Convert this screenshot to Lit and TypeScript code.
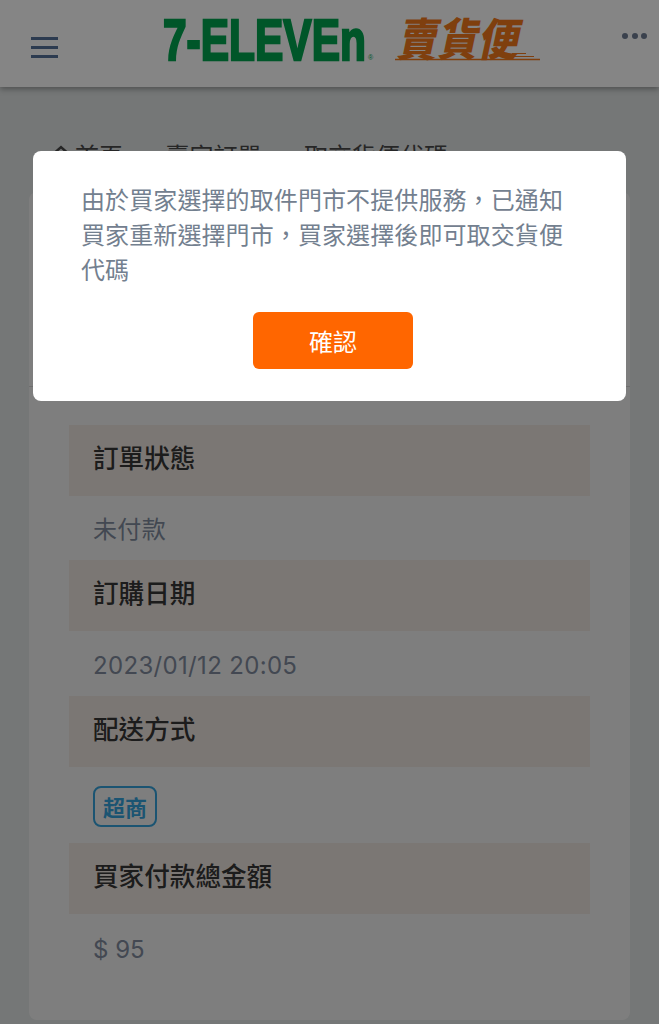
import { LitElement, html, css } from "lit";
import { customElement } from "lit/decorators.js";

const ROWS: [string, unknown, string][] = [
  ["訂單狀態", "未付款", "v1"],
  ["訂購日期", "2023/01/12 20:05", "v2"],
  ["配送方式", html`<span class="badge">超商</span>`, "v3"],
  ["買家付款總金額", "$ 95", "v4"],
];

@customElement("app-root")
export class AppRoot extends LitElement {
  static styles = css`
    :host {
      display: block;
      position: relative;
      height: 1024px;
      overflow: hidden;
      background: #e0e4e4;
      font-family: Inter, "Noto Sans CJK TC", sans-serif;
      font-size: 24px;
    }
    header {
      height: 87px;
      background: #fff;
      box-shadow: 0 2px 6px rgba(0, 0, 0, 0.35);
      display: flex;
      position: relative;
      box-sizing: border-box;
    }
    .burger {
      margin: 37px 0 0 31px;
      width: 27px;
      height: 21px;
      display: flex;
      flex-direction: column;
      justify-content: space-between;
    }
    .burger i { display: block; height: 3px; background: #55719a; }
    .logo { position: absolute; left: 160px; top: 0; }
    .dots { position: absolute; left: 622px; top: 33px; display: flex; gap: 3.5px; }
    .dots i { width: 6px; height: 6px; border-radius: 50%; background: #6f7d95; }
    main { padding: 0 29px; }
    .crumb {
      margin: 57px 0 0 0;
      height: 48px;
      padding-left: 20px;
      display: flex;
      align-items: flex-start;
      color: #4a4a4a;
      line-height: 26px;
    }
    .crumb .sep { width: 44px; height: 24px; display: flex; justify-content: center; margin: 2px -0.75px 0; }
    .crumb span.home { margin-left: 2px; }
    .card {
      height: 828px;
      box-sizing: border-box;
      background: #f2f2f2;
      border-radius: 8px;
      padding: 0 40px;
    }
    .title { height: 194px; border-bottom: 1px solid #d4d4d4; margin: 0 -40px; }
    .rows { padding-top: 38px; }
    .head {
      background: #ece4de;
      height: 71px;
      padding-left: 24px;
      padding-bottom: 9px;
      display: flex;
      align-items: center;
      box-sizing: border-box;
      font-size: 25.6px;
      font-weight: 500;
      color: #363636;
    }
    .val {
      padding-left: 24px;
      display: flex;
      align-items: center;
      color: #808b9d;
      letter-spacing: 0.33px;
      box-sizing: border-box;
    }
    .v1 { height: 64px; padding-bottom: 1px; }
    .v2 { height: 65px; padding-top: 3px; }
    .v3 { height: 76px; padding-top: 2px; }
    .v4 { height: 68px; padding-top: 2px; letter-spacing: 0; }
    .badge {
      display: inline-flex;
      align-items: center;
      justify-content: center;
      width: 64px;
      height: 41px;
      box-sizing: border-box;
      border: 2px solid #35a2da;
      border-radius: 8px;
      color: #35a2da;
      font-size: 22px;
      font-weight: 700;
      letter-spacing: 0;
    }
    .overlay { position: absolute; inset: 0; background: rgba(0, 0, 0, 0.48); }
    .modal {
      position: absolute;
      left: 33px;
      top: 151px;
      width: 593px;
      height: 250px;
      box-sizing: border-box;
      background: #fff;
      border-radius: 8px;
      padding: 32px 48px 0;
      display: flex;
      flex-direction: column;
    }
    .modal p { margin: 0; color: #73808f; line-height: 35px; letter-spacing: 0.1px; }
    .confirm {
      align-self: flex-start;
      margin: 24px 0 0 172px;
      width: 160px;
      height: 57px;
      border: 0;
      border-radius: 6px;
      background: #ff6600;
      color: #fff;
      font: inherit;
    }
  `;

  render() {
    const chevron = html`<span class="sep"><svg width="12" height="24" viewBox="0 0 12 24" fill="none" stroke="#555" stroke-width="2"><path d="M3 6l6 7-6 7" /></svg></span>`;
    return html`
      <header>
        <div class="burger"><i></i><i></i><i></i></div>
        <svg class="logo" width="390" height="87" viewBox="0 0 390 87">
          <text transform="translate(3 60) scale(0.745 1)" font-family="Liberation Sans" font-weight="700" font-size="57" fill="#00a650" stroke="#00a650" stroke-width="2.4">7-ELEVEn</text>
          <text x="208" y="60" font-family="Liberation Sans" font-size="7" fill="#00a650">®</text>
          <text transform="translate(236 56) skewX(-12) scale(0.9 1)" font-family="Noto Sans CJK TC" font-weight="900" font-size="45" fill="#f47a1c">賣貨便</text>
          <path d="M235 59.5H380" fill="none" stroke="#f47a1c" stroke-width="1.4" />
          <path d="M354 56.5H374M352 53.5H366" stroke="#f47a1c" stroke-width="1.2" />
        </svg>
        <div class="dots"><i></i><i></i><i></i></div>
      </header>
      <main>
        <div class="crumb">
          <svg width="24" height="24" viewBox="0 0 24 24" fill="none" stroke="#4a4a4a" stroke-width="2.4">
            <path d="M2 12 12 3l10 9M5 11v11h14V11" />
          </svg>
          <span class="home">首頁</span>
          ${chevron}
          <span>賣家訂單</span>
          ${chevron}
          <span>取交貨便代碼</span>
        </div>
        <section class="card">
          <div class="title"></div>
          <div class="rows">
            ${ROWS.map(
              ([h, v, c]) => html`<div class="head">${h}</div><div class="val ${c}">${v}</div>`
            )}
          </div>
        </section>
      </main>
      <div class="overlay"></div>
      <div class="modal">
        <p>由於買家選擇的取件門市不提供服務，已通知買家重新選擇門市，買家選擇後即可取交貨便代碼</p>
        <button class="confirm">確認</button>
      </div>
    `;
  }
}
